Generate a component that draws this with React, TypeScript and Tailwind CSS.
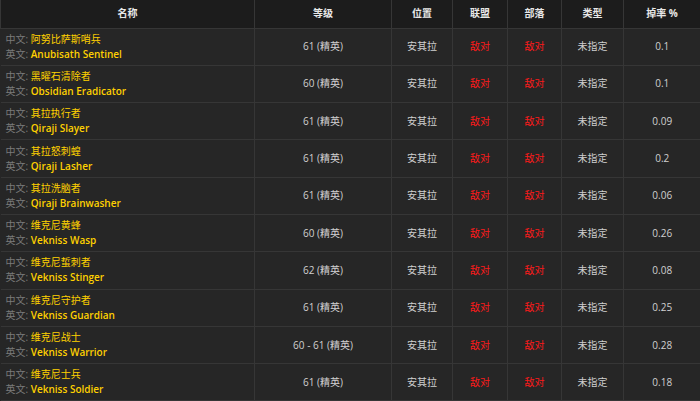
import React from 'react';

const mobs = [
  { cn: '阿努比萨斯哨兵', en: 'Anubisath Sentinel', level: '61 (精英)', rate: '0.1' },
  { cn: '黑曜石清除者', en: 'Obsidian Eradicator', level: '60 (精英)', rate: '0.1' },
  { cn: '其拉执行者', en: 'Qiraji Slayer', level: '61 (精英)', rate: '0.09' },
  { cn: '其拉怒刺蝗', en: 'Qiraji Lasher', level: '61 (精英)', rate: '0.2' },
  { cn: '其拉洗脑者', en: 'Qiraji Brainwasher', level: '61 (精英)', rate: '0.06' },
  { cn: '维克尼黄蜂', en: 'Vekniss Wasp', level: '60 (精英)', rate: '0.26' },
  { cn: '维克尼蜇刺者', en: 'Vekniss Stinger', level: '62 (精英)', rate: '0.08' },
  { cn: '维克尼守护者', en: 'Vekniss Guardian', level: '61 (精英)', rate: '0.25' },
  { cn: '维克尼战士', en: 'Vekniss Warrior', level: '60 - 61 (精英)', rate: '0.28' },
  { cn: '维克尼士兵', en: 'Vekniss Soldier', level: '61 (精英)', rate: '0.18' },
];

const headers = [
  { label: '名称', w: 'w-[254px]' },
  { label: '等级', w: 'w-[137px]' },
  { label: '位置', w: 'w-[61px]' },
  { label: '联盟', w: 'w-[55px]' },
  { label: '部落', w: 'w-[54px]' },
  { label: '类型', w: 'w-[62px]' },
  { label: '掉率 %', w: 'w-[77px]' },
];

export default function App() {
  return (
    <div
      className="w-[700px] h-[401px] overflow-hidden bg-[#262626] text-[10px] text-[#d0d0d0]"
      style={{ fontFamily: '"Open Sans", "Noto Sans CJK SC", sans-serif' }}
    >
      <table className="w-[700px] border-collapse table-fixed">
        <thead>
          <tr className="h-[28px] bg-[#1c1c1c]">
            {headers.map((h) => (
              <th
                key={h.label}
                className={`${h.w} border border-[#363636] border-t-0 font-bold text-[#e8e8e8] text-center`}
              >
                {h.label}
              </th>
            ))}
          </tr>
        </thead>
        <tbody>
          {mobs.map((m) => (
            <tr key={m.en} className="h-[37.3px]">
              <td className="border border-[#363636] border-l-0 px-[5px] leading-[15px]">
                <div>
                  <span className="text-[#7a7a7a]">中文: </span>
                  <span className="text-[#ffd100]">{m.cn}</span>
                </div>
                <div>
                  <span className="text-[#7a7a7a]">英文: </span>
                  <span className="text-[#ffd100] font-semibold">{m.en}</span>
                </div>
              </td>
              <td className="border border-[#363636] text-center">{m.level}</td>
              <td className="border border-[#363636] text-center">安其拉</td>
              <td className="border border-[#363636] text-center text-[#ff1a1a]">敌对</td>
              <td className="border border-[#363636] text-center text-[#ff1a1a]">敌对</td>
              <td className="border border-[#363636] text-center">未指定</td>
              <td className="border border-[#363636] border-r-0 text-center">{m.rate}</td>
            </tr>
          ))}
        </tbody>
      </table>
    </div>
  );
}
